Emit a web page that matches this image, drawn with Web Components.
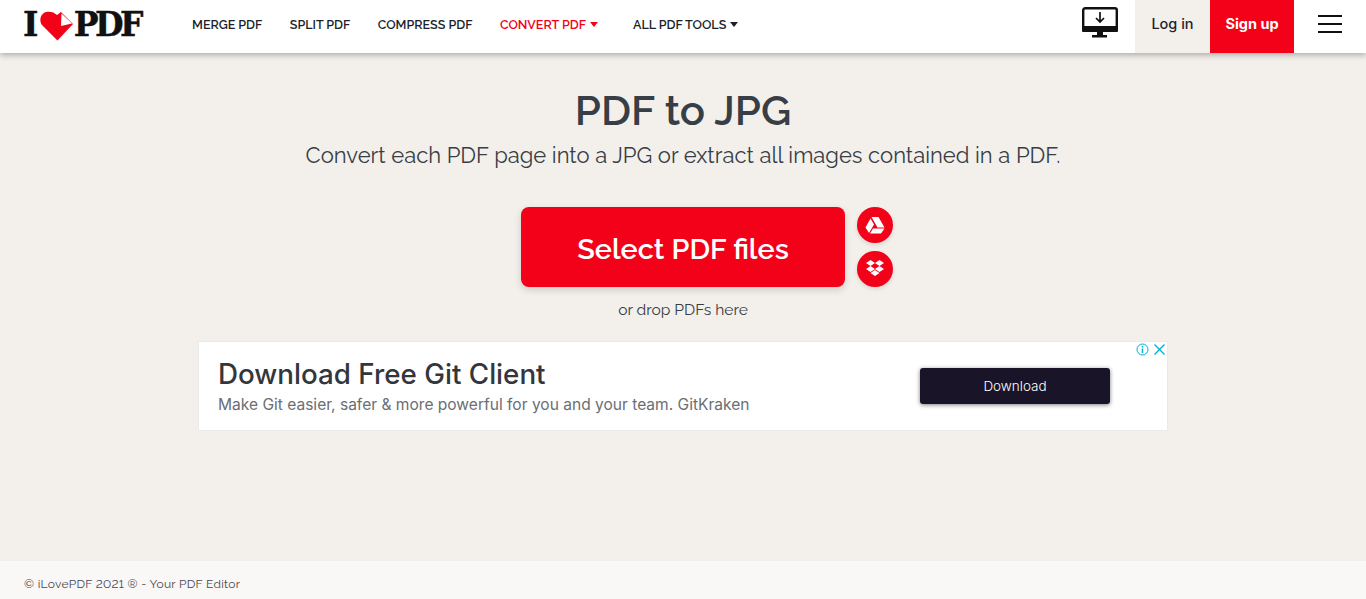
<!DOCTYPE html>
<html>
<head>
<meta charset="utf-8">
<title>PDF to JPG</title>
<style>
  html, body { margin: 0; height: 100%; }
  body { background: #f3f0ec; font-family: Raleway, Lato, "Noto Sans", sans-serif; color: #383e45; }
  #page { display: flex; flex-direction: column; height: 599px; overflow: hidden; }
</style>
</head>
<body>
<div id="page">
  <ilp-header></ilp-header>
  <ilp-tool>
    <h1 slot="title">PDF to JPG</h1>
    <span slot="subtitle">Convert each PDF page into a JPG or extract all images contained in a PDF.</span>
  </ilp-tool>
  <ilp-ad></ilp-ad>
  <ilp-footer>© iLovePDF 2021 ® - Your PDF Editor</ilp-footer>
</div>

<script>
class IlpHeader extends HTMLElement {
  constructor() {
    super();
    this.attachShadow({ mode: 'open' });
    this.shadowRoot.innerHTML = `
    <style>
      :host { display: flex; align-items: stretch; height: 53px; background: #fff; box-shadow: 0 2px 6px rgba(0,0,0,.3); font-family: Raleway, Lato, sans-serif; position: relative; z-index: 2; }
      .logo { display: flex; align-items: center; margin-left: 23px; width: 169px; padding-bottom: 5px; box-sizing: border-box; font: 900 33px/1 "DejaVu Serif", serif; color: #111; letter-spacing: -3.600px; -webkit-text-stroke: .4px #111; }
      .logo svg { margin: 4px -1px 0 5px; flex: none; }
      nav { display: flex; align-items: center; padding-bottom: 5px; font-size: 12.500px; font-weight: 600; color: #1d1f2b; }
      nav a { margin-right: 27.500px; white-space: nowrap; }
      nav a.on { color: #f30019; margin-right: 35px; }
      .caret { display: inline-block; border: 4.500px solid transparent; border-top: 5px solid currentColor; border-bottom: 0; margin-left: 4px; vertical-align: 2px; }
      .right { margin-left: auto; display: flex; align-items: stretch; }
      .dl { display: flex; align-items: center; margin-right: 17px; padding-bottom: 7px; }
      .login, .signup { display: flex; align-items: center; justify-content: center; padding-bottom: 6px; box-sizing: border-box; font-family: Inter, sans-serif; font-size: 14.500px; }
      .login { width: 75px; background: #f3f0ec; color: #1d1f2b; font-weight: 500; }
      .signup { width: 84px; background: #f30019; color: #fff; font-weight: 700; }
      .burger { width: 72px; display: flex; flex-direction: column; justify-content: center; align-items: center; gap: 6px; padding-bottom: 5px; box-sizing: border-box; }
      .burger i { display: block; width: 24px; height: 2px; background: #111; }
    </style>
    <div class="logo">I<svg width="35" height="30" viewBox="0 0 35 30"><path d="M17.500 29.500 2 14C-1 10 0 3 6 1c4-1 8 0 11 3l4-3 12 12z" fill="#f30019"/><path d="M21.500 2.500 32 12.500 21 15z" fill="#fff"/></svg>PDF</div>
    <nav>
      <a>MERGE PDF</a><a>SPLIT PDF</a><a>COMPRESS PDF</a>
      <a class="on">CONVERT PDF<span class="caret"></span></a>
      <a>ALL PDF TOOLS<span class="caret"></span></a>
    </nav>
    <div class="right">
      <div class="dl"><svg width="36" height="32" viewBox="0 0 36 32"><rect x="1.200" y="1.200" width="33.600" height="22" rx="2" fill="none" stroke="#111" stroke-width="2.400"/><rect x="0" y="19" width="36" height="6" rx="1" fill="#111"/><path d="M15 25h6v3h4v2.500H10V28h5z" fill="#111"/><path d="M18 5v10M14 11l4 4 4-4" fill="none" stroke="#111" stroke-width="1.700"/></svg></div>
      <div class="login">Log in</div>
      <div class="signup">Sign up</div>
      <div class="burger"><i></i><i></i><i></i></div>
    </div>`;
  }
}

class IlpTool extends HTMLElement {
  constructor() {
    super();
    this.attachShadow({ mode: 'open' });
    this.shadowRoot.innerHTML = `
    <style>
      :host { display: flex; flex-direction: column; align-items: center; font-family: Raleway, Lato, sans-serif; color: #383e45; }
      ::slotted(h1) { margin: 34px 0 0; font-size: 42px; font-weight: 600; line-height: 48px; font-family: Raleway, Lato, sans-serif; }
      .sub { margin-top: 4px; font-size: 22px; line-height: 32px; font-weight: 400; }
      .row { display: flex; align-items: center; gap: 12px; margin: 36px 0 0 48px; }
      .btn { width: 324px; height: 80px; padding-top: 4px; box-sizing: border-box; border-radius: 8px; background: #f30019; color: #fff; display: flex; align-items: center; justify-content: center; font-size: 28.800px; font-weight: 600; box-shadow: 0 3px 7px rgba(0,0,0,.16); }
      .side { display: flex; flex-direction: column; gap: 8px; }
      .side div { width: 36px; height: 36px; border-radius: 50%; background: #f30019; display: flex; align-items: center; justify-content: center; box-shadow: 0 2px 4px rgba(0,0,0,.12); }
      .drop { margin-top: 13px; font-size: 15.600px; line-height: 20px; font-weight: 400; }
    </style>
    <slot name="title"></slot>
    <div class="sub"><slot name="subtitle"></slot></div>
    <div class="row">
      <div class="btn">Select PDF files</div>
      <div class="side">
        <div><svg width="20" height="18" viewBox="0 0 20 18"><path d="M6.500 1h7l6 10.500h-7zM5.500 2.500 9 8.500 4 17 .500 11.500zM8 12.500h11.500L16 17.500H5z" fill="#fff"/></svg></div>
        <div><svg width="20" height="18" viewBox="0 0 20 18"><path d="M5.500 0 10 3 5.500 6 1 3zM14.500 0 19 3l-4.500 3L10 3zM5.500 6 10 9l-4.500 3L1 9zM14.500 6 19 9l-4.500 3L10 9zM5.500 13 10 10l4.500 3L10 16z" fill="#fff"/></svg></div>
      </div>
    </div>
    <div class="drop">or drop PDFs here</div>`;
  }
}

class IlpAd extends HTMLElement {
  constructor() {
    super();
    this.attachShadow({ mode: 'open' });
    this.shadowRoot.innerHTML = `
    <style>
      :host { display: block; position: relative; box-sizing: border-box; width: 970px; height: 90px; margin: 21px auto 0; background: #fff; border: 1px solid #eaeaea; font-family: Inter, sans-serif; }
      .inner { display: flex; align-items: center; height: 100%; padding: 0 57px 0 19px; box-sizing: border-box; }
      .txt { flex: 1; }
      .t { font-size: 27.750px; line-height: 34px; font-weight: 500; color: #33363a; }
      .d { font-size: 15.550px; line-height: 20px; color: #6b6e73; margin-top: 4px; }
      .dl { width: 190px; height: 36px; padding-bottom: 1px; box-sizing: border-box; background: #1a1428; color: #fff; border-radius: 3px; display: flex; align-items: center; justify-content: center; font-size: 13.500px; font-weight: 300; box-shadow: 0 1px 4px rgba(0,0,0,.5); }
      .mark { position: absolute; top: 1px; right: 1px; display: flex; gap: 4px; }
    </style>
    <div class="inner">
      <div class="txt">
        <div class="t">Download Free Git Client</div>
        <div class="d">Make Git easier, safer &amp; more powerful for you and your team. GitKraken</div>
      </div>
      <div class="dl">Download</div>
    </div>
    <div class="mark">
      <svg width="13" height="13" viewBox="0 0 13 13"><circle cx="6.500" cy="6.500" r="5.500" fill="none" stroke="#00aecd" stroke-width="1"/><path d="M6.500 3v1.400M6.500 5.500V10" stroke="#00aecd" stroke-width="1.500"/></svg>
      <svg width="13" height="13" viewBox="0 0 13 13"><path d="M1.500 1.500l10 10M11.500 1.500l-10 10" stroke="#00aecd" stroke-width="1.300"/></svg>
    </div>`;
  }
}

class IlpFooter extends HTMLElement {
  constructor() {
    super();
    this.attachShadow({ mode: 'open' });
    this.shadowRoot.innerHTML = `
    <style>
      :host { display: flex; align-items: center; margin-top: auto; height: 38px; padding: 8px 0 0 24px; box-sizing: border-box; background: #f9f8f6; font-size: 12px; color: #47474f; font-family: Raleway, Lato, sans-serif; font-weight: 400; font-variant-numeric: lining-nums; letter-spacing: .3px; }
    </style>
    <slot></slot>`;
  }
}

customElements.define('ilp-header', IlpHeader);
customElements.define('ilp-tool', IlpTool);
customElements.define('ilp-ad', IlpAd);
customElements.define('ilp-footer', IlpFooter);
</script>
</body>
</html>
